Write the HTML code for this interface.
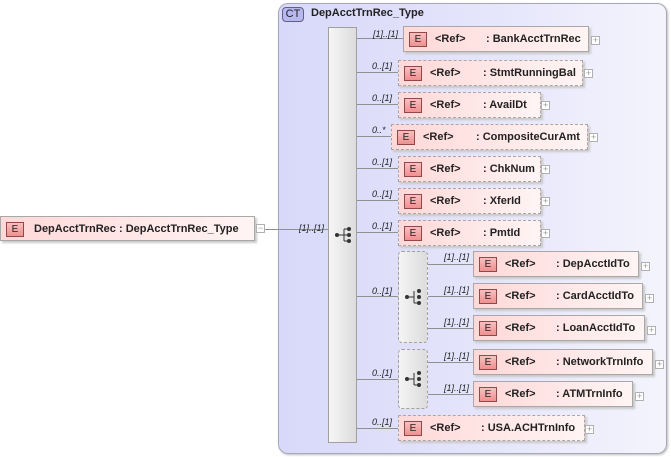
<!DOCTYPE html>
<html><head><meta charset="utf-8"><style>
*{margin:0;padding:0;box-sizing:border-box}
body{width:671px;height:457px;background:#fff;position:relative;overflow:hidden;font-family:"Liberation Sans",sans-serif}
.a{position:absolute}
.ct{left:278px;top:3px;width:389px;height:451px;border:1px solid #a8a8b8;border-radius:10px;background:linear-gradient(90deg,#d8d8fa 0%,#e4e4fb 50%,#f4f4fd 100%);box-shadow:1px 1px 2px #bbb}
.ctb{left:282px;top:7px;width:22px;height:15px;border:1px solid #606080;border-radius:4px;background:#b8b8f0;font-size:11px;line-height:13px;text-align:center;color:#222}
.title{left:311px;top:7px;font-size:11px;font-weight:bold;color:#222}
.seq{left:328px;top:27px;width:29px;height:416px;border:1px solid #a0a0a0;background:linear-gradient(90deg,#f6f6f6,#dcdcdc)}
.ch{width:30px;border:1px dashed #a0a0a0;border-radius:4px;background:linear-gradient(90deg,#f4f4f4,#dcdcdc)}
.el{height:26px;border:1px solid #a8a8a8;background:linear-gradient(90deg,#ffd8d8,#fff4f4);box-shadow:2px 2px 2px #c8c8c8;font-size:11px;font-weight:bold;color:#222;white-space:nowrap}
.el.d{border-style:dashed}
.e{position:absolute;left:5px;top:5px;width:18px;height:15px;border:1px solid #904848;background:linear-gradient(180deg,#f8c0c0,#ee9090);font-size:10px;font-weight:normal;line-height:13px;text-align:center}
.r{position:absolute;left:31px;top:6px}
.n{position:absolute;top:6px}
.p{width:9px;height:9px;border:1px solid #b0b0b0;background:#fff;font-size:9px;line-height:7px;text-align:center;color:#999}
.l{height:1px;background:#909090}
.m{font-size:9px;font-style:italic;color:#222}
</style></head><body>
<div class="a ct"></div>
<div class="a ctb">CT</div>
<div class="a title">DepAcctTrnRec_Type</div>

<div class="a el" style="left:0;top:216px;width:255px;height:25px"><div class="e">E</div><span class="n" style="left:33px">DepAcctTrnRec : DepAcctTrnRec_Type</span></div>
<div class="a p" style="left:256px;top:224px;line-height:7px">−</div>
<div class="a l" style="left:265px;top:229px;width:63px"></div>
<div class="a m" style="left:299px;top:223px">[1]..[1]</div>

<div class="a seq"></div>
<svg class="a" style="left:334px;top:226px" width="20" height="20"><circle cx="3" cy="9" r="2" fill="#333"/><line x1="3" y1="9" x2="10" y2="9" stroke="#333"/><path d="M10 3V15M10 3H14M10 9H14M10 15H14" stroke="#333" fill="none"/><circle cx="15" cy="3" r="2" fill="#333"/><circle cx="15" cy="9" r="2" fill="#333"/><circle cx="15" cy="15" r="2" fill="#333"/></svg>

<div class="a l" style="left:357px;top:38px;width:46px"></div><div class="a m" style="left:373px;top:29px">[1]..[1]</div>
<div class="a el" style="left:403px;top:26px;width:186px"><div class="e">E</div><span class="r">&lt;Ref&gt;</span><span class="n" style="left:82px">: BankAcctTrnRec</span></div><div class="a p" style="left:591px;top:36px">+</div>

<div class="a l" style="left:357px;top:72px;width:41px"></div><div class="a m" style="left:372px;top:61px">0..[1]</div>
<div class="a el d" style="left:398px;top:60px;width:185px"><div class="e">E</div><span class="r">&lt;Ref&gt;</span><span class="n" style="left:84px">: StmtRunningBal</span></div><div class="a p" style="left:584px;top:69px">+</div>

<div class="a l" style="left:357px;top:104px;width:41px"></div><div class="a m" style="left:372px;top:93px">0..[1]</div>
<div class="a el d" style="left:398px;top:92px;width:143px"><div class="e">E</div><span class="r">&lt;Ref&gt;</span><span class="n" style="left:84px">: AvailDt</span></div><div class="a p" style="left:541px;top:101px">+</div>

<div class="a l" style="left:357px;top:136px;width:34px"></div><div class="a m" style="left:372px;top:125px">0..*</div>
<div class="a el d" style="left:391px;top:124px;width:197px"><div class="e">E</div><span class="r">&lt;Ref&gt;</span><span class="n" style="left:84px">: CompositeCurAmt</span></div><div class="a p" style="left:589px;top:133px">+</div>

<div class="a l" style="left:357px;top:168px;width:41px"></div><div class="a m" style="left:372px;top:157px">0..[1]</div>
<div class="a el d" style="left:398px;top:156px;width:143px"><div class="e">E</div><span class="r">&lt;Ref&gt;</span><span class="n" style="left:84px">: ChkNum</span></div><div class="a p" style="left:541px;top:165px">+</div>

<div class="a l" style="left:357px;top:200px;width:41px"></div><div class="a m" style="left:372px;top:189px">0..[1]</div>
<div class="a el d" style="left:398px;top:188px;width:143px"><div class="e">E</div><span class="r">&lt;Ref&gt;</span><span class="n" style="left:84px">: XferId</span></div><div class="a p" style="left:541px;top:197px">+</div>

<div class="a l" style="left:357px;top:232px;width:41px"></div><div class="a m" style="left:372px;top:221px">0..[1]</div>
<div class="a el d" style="left:398px;top:220px;width:143px"><div class="e">E</div><span class="r">&lt;Ref&gt;</span><span class="n" style="left:84px">: PmtId</span></div><div class="a p" style="left:541px;top:229px">+</div>

<div class="a l" style="left:357px;top:296px;width:41px"></div><div class="a m" style="left:372px;top:286px">0..[1]</div>
<div class="a ch" style="left:398px;top:251px;height:92px"></div>
<svg class="a" style="left:404px;top:288px" width="20" height="20"><circle cx="3" cy="9" r="2" fill="#333"/><line x1="3" y1="9" x2="10" y2="9" stroke="#333"/><path d="M10 3V15M10 15H13" stroke="#333" fill="none"/><circle cx="15" cy="3" r="2" fill="#333"/><circle cx="15" cy="9" r="2" fill="#333"/><circle cx="15" cy="15" r="2" fill="#333"/></svg>
<div class="a l" style="left:428px;top:264px;width:45px"></div><div class="a m" style="left:444px;top:252px">[1]..[1]</div>
<div class="a l" style="left:428px;top:296px;width:45px"></div><div class="a m" style="left:444px;top:285px">[1]..[1]</div>
<div class="a l" style="left:428px;top:328px;width:45px"></div><div class="a m" style="left:444px;top:317px">[1]..[1]</div>
<div class="a el" style="left:473px;top:251px;width:166px"><div class="e">E</div><span class="r">&lt;Ref&gt;</span><span class="n" style="left:82px">: DepAcctIdTo</span></div><div class="a p" style="left:641px;top:262px">+</div>
<div class="a el" style="left:473px;top:283px;width:170px"><div class="e">E</div><span class="r">&lt;Ref&gt;</span><span class="n" style="left:82px">: CardAcctIdTo</span></div><div class="a p" style="left:645px;top:294px">+</div>
<div class="a el" style="left:473px;top:315px;width:172px"><div class="e">E</div><span class="r">&lt;Ref&gt;</span><span class="n" style="left:82px">: LoanAcctIdTo</span></div><div class="a p" style="left:647px;top:326px">+</div>

<div class="a l" style="left:357px;top:379px;width:41px"></div><div class="a m" style="left:372px;top:368px">0..[1]</div>
<div class="a ch" style="left:398px;top:349px;height:60px"></div>
<svg class="a" style="left:404px;top:370px" width="20" height="20"><circle cx="3" cy="9" r="2" fill="#333"/><line x1="3" y1="9" x2="10" y2="9" stroke="#333"/><path d="M10 3V15M10 15H13" stroke="#333" fill="none"/><circle cx="15" cy="3" r="2" fill="#333"/><circle cx="15" cy="9" r="2" fill="#333"/><circle cx="15" cy="15" r="2" fill="#333"/></svg>
<div class="a l" style="left:428px;top:362px;width:45px"></div><div class="a m" style="left:444px;top:351px">[1]..[1]</div>
<div class="a l" style="left:428px;top:394px;width:45px"></div><div class="a m" style="left:444px;top:383px">[1]..[1]</div>
<div class="a el" style="left:473px;top:349px;width:180px"><div class="e">E</div><span class="r">&lt;Ref&gt;</span><span class="n" style="left:82px">: NetworkTrnInfo</span></div><div class="a p" style="left:655px;top:360px">+</div>
<div class="a el" style="left:473px;top:381px;width:160px"><div class="e">E</div><span class="r">&lt;Ref&gt;</span><span class="n" style="left:82px">: ATMTrnInfo</span></div><div class="a p" style="left:635px;top:392px">+</div>

<div class="a l" style="left:357px;top:428px;width:41px"></div><div class="a m" style="left:372px;top:417px">0..[1]</div>
<div class="a el d" style="left:398px;top:415px;width:187px"><div class="e">E</div><span class="r">&lt;Ref&gt;</span><span class="n" style="left:82px">: USA.ACHTrnInfo</span></div><div class="a p" style="left:585px;top:425px">+</div>
</body></html>
